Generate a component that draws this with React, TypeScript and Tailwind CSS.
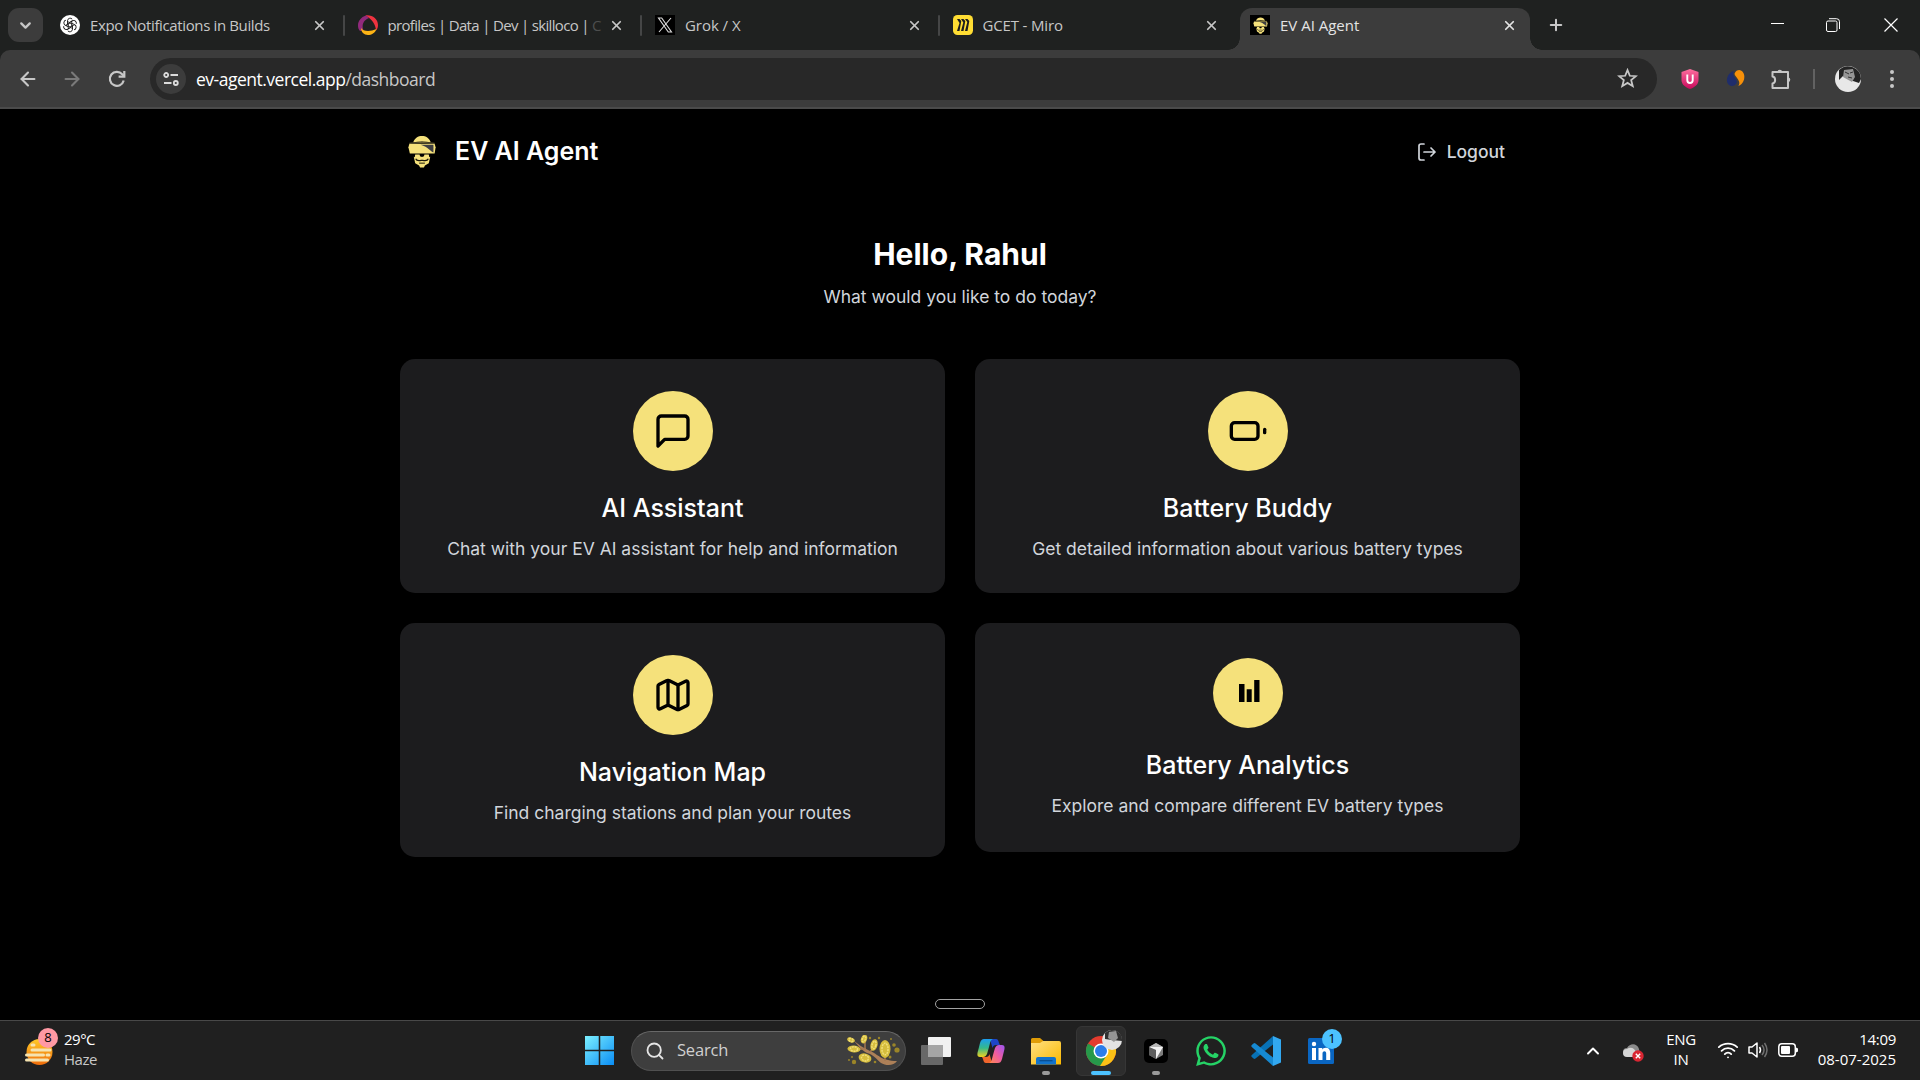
import React from "react";
import { Map, Search, ChevronDown, ChevronUp, ArrowLeft, ArrowRight, Plus, X, Wifi } from "lucide-react";
import { FaWhatsapp } from "react-icons/fa";

const ui = "font-['Open_Sans','Noto_Sans',sans-serif]";

function RobotFace({ className }: { className?: string }) {
  return (
    <svg viewBox="0 0 30 34" className={className}>
      <path d="M6 7.500C7.500 3 11 1 15 1s7.500 2 9 6.500Q15 5.800 6 7.500z" fill="#f5e17b" />
      <path d="M2 9h26l1 3.500-1 6.500H2.500L1 12.500z" fill="#f5e17b" />
      <path d="M13.500 10h13.300v8c-3-1-5-5.500-13.300-8z" fill="#3f3f43" />
      <path d="M2 8.500Q15 6.800 28 8.500" stroke="#6b6238" strokeWidth="1" fill="none" />
      <path d="M8 20h4.500l.5 2h4l.5-2H22l.5 3 1-.500-1.500 6.500-4 2.500-1 2h-4l-1-2-4-2.500L6.500 22.500l1 .500z" fill="#f5e17b" />
      <path d="M8.500 24.500c1 3 4 2 6.500 1.500 2.500.5 5.500 1.500 6.500-1.500" stroke="#171509" strokeWidth="1.200" fill="none" />
      <path d="M12 29h6" stroke="#171509" strokeWidth="1" fill="none" />
      <path d="M13.300 22.500l1.700-2.500 1.700 2.500z" fill="#000" />
    </svg>
  );
}

function OpenAiIcon() {
  return (
    <svg viewBox="0 0 20 20" className="size-5">
      <circle cx="10" cy="10" r="10" fill="#fff" />
      <g fill="none" stroke="#111" strokeWidth=".9">
        {[0, 60, 120, 180, 240, 300].map((a) => (
          <path key={a} transform={`rotate(${a} 10 10)`} d="M7.500 9V5.800a2.700 2.700 0 0 1 4.700-1.700M7.500 6.500l4.700 2.700" />
        ))}
      </g>
    </svg>
  );
}

function SwirlIcon() {
  return (
    <svg viewBox="0 0 20 20" className="size-5">
      <path d="M7.500.500C14-.500 20 4 20 10c0 2-.5 4-2 5.500C17.500 9.500 14 4 7.500.500z" fill="#ef3340" />
      <path d="M8 .500C3 2 0 6 0 10.500c0 2 .5 4 2 5.500l3.500-.5C3.500 10 5 5.500 11 3z" fill="#912a7c" />
      <path d="M3 13c2 3.500 9 4 15.500 1-1.500 4-5 6-8.500 6-4 0-7-3-7-7z" fill="#fcb315" />
    </svg>
  );
}

function XLogo() {
  return (
    <svg viewBox="0 0 20 20" className="size-5">
      <rect width="20" height="20" fill="#000" />
      <path d="M3.500 3h3.200l9.800 14h-3.200zM16 3L4 17M6.500 3h-3" stroke="#ddd" strokeWidth="1.100" fill="none" />
    </svg>
  );
}

function MiroIcon() {
  return (
    <svg viewBox="0 0 20 20" className="size-5">
      <rect width="20" height="20" rx="4.500" fill="#ffdd33" />
      <path d="M4 4h2.500l1.800 2L6.500 16H4l2.500-8zM8 4h2.500l1.800 2-1.800 10H8l2.300-8.500zM12 4h2.500l1.800 2-1.800 10H12l2.300-9z" fill="#1c1c1e" />
    </svg>
  );
}

function EvIcon() {
  return (
    <span className="flex size-5 items-center justify-center bg-black">
      <RobotFace className="h-[17px] w-[15px]" />
    </span>
  );
}

function Tab({ icon, title, tracking, faded }: { icon: React.ReactNode; title: string; tracking: string; faded?: string }) {
  return (
    <div className="flex h-full w-[297.500px] shrink-0 items-center pl-[13px] pr-[18px]">
      {icon}
      <span className={`ml-[10px] flex-1 text-[15px] leading-5 whitespace-nowrap ${tracking}`}>
        {title}
        {faded && <span className="text-[#4d4e4e]">{faded}</span>}
      </span>
      <X className="size-[15px] shrink-0" strokeWidth={2.800} />
    </div>
  );
}

function Separator() {
  return <i className="relative -left-px -mx-px h-[21px] w-[2px] shrink-0 rounded bg-[#454646]" />;
}

function TabStrip() {
  return (
    <div className="flex h-[50px] items-center bg-[#1f2120] text-[#c7c7c7]">
      <div className="ml-2 flex h-[34px] w-[35px] shrink-0 items-center justify-center rounded-[11px] bg-[#3c3c3c]">
        <ChevronDown className="size-[17px]" strokeWidth={3.200} />
      </div>
      <div className="ml-[4px] flex h-full items-center">
        <Tab icon={<OpenAiIcon />} title="Expo Notifications in Builds" tracking="tracking-[-0.370px]" />
        <Separator />
        <Tab icon={<SwirlIcon />} title="profiles | Data | Dev | skilloco | " faded="C" tracking="tracking-[-0.670px]" />
        <Separator />
        <Tab icon={<XLogo />} title="Grok / X" tracking="tracking-[-0.050px]" />
        <Separator />
        <Tab icon={<MiroIcon />} title="GCET - Miro" tracking="tracking-[-0.150px]" />
      </div>
      <div className="relative ml-[3px] mt-[8px] flex h-[42px] w-[290px] shrink-0 items-center rounded-t-[12px] bg-[#3c3c3c] pb-[8px] pl-[10px] pr-[13px] text-[#e4e4e4]">
        <i className="absolute -left-3 bottom-0 size-3 bg-[radial-gradient(circle_at_0_0,#1f2120_11.500px,#3c3c3c_12px)]" />
        <i className="absolute -right-3 bottom-0 size-3 bg-[radial-gradient(circle_at_100%_0,#1f2120_11.500px,#3c3c3c_12px)]" />
        <EvIcon />
        <span className="ml-[10px] flex-1 text-[15px] tracking-[0px]">EV AI Agent</span>
        <X className="size-[15px]" strokeWidth={2.800} />
      </div>
      <Plus className="ml-[17px] size-[18px]" strokeWidth={2.700} />
      <div className="ml-auto flex h-full items-center text-white">
        <i className="mb-[3px] h-px w-[13px] bg-white" />
        <svg viewBox="0 0 14 14" className="ml-[42px] size-[14px]" fill="none" stroke="currentColor">
          <rect x=".5" y="3" width="10.500" height="10.500" rx="1.500" />
          <path d="M3 .7h7.500a3 3 0 0 1 3 3V11" />
        </svg>
        <svg viewBox="0 0 14 14" className="ml-[44px] mr-[22px] size-[14px]" stroke="currentColor" strokeWidth="1.200">
          <path d="M.5.500l13 13M13.500.500l-13 13" />
        </svg>
      </div>
    </div>
  );
}

function Toolbar() {
  return (
    <div className="bg-[#1f2120]">
      <div className="flex h-[59px] items-center rounded-t-[10px] border-b-2 border-b-[#4b4b4b] bg-[#3c3c3c] text-[#c7c7c7]">
        <ArrowLeft className="ml-[17px] size-[22px]" strokeWidth={2.300} />
        <ArrowRight className="ml-[22px] size-[22px] text-[#7a7a7a]" strokeWidth={2.300} />
        <svg viewBox="0 0 24 24" className="ml-[22px] size-6" fill="none" stroke="currentColor" strokeWidth="2.200">
          <path d="M18.700 13.500a7 7 0 1 1-1.500-6.300l2 2" />
          <path d="M19.300 4v5.700h-5.700" />
        </svg>
        <div className="ml-[21px] flex h-[42px] w-[1507px] items-center rounded-full bg-[#282828] pl-[6px] pr-[19px]">
          <span className="flex size-[30px] items-center justify-center rounded-full bg-[#3c3c3c]">
            <svg viewBox="0 0 16 14" className="h-[14px] w-4" fill="none" stroke="#dcdcdc" strokeWidth="1.800">
              <circle cx="3.200" cy="3" r="2" />
              <path d="M7.500 3H15M1 11h7.500" />
              <circle cx="12.800" cy="11" r="2" />
            </svg>
          </span>
          <span className="ml-[10px] mt-[2px] flex-1 text-[17.500px] tracking-[-0.500px] text-white">
            ev-agent.vercel.app<span className="text-[#c7c7c7]">/dashboard</span>
          </span>
          <svg viewBox="0 0 20 20" className="size-[21px]" fill="none" stroke="currentColor" strokeWidth="1.700">
            <path d="M10 2l2.200 5.400 5.800.400-4.500 3.800 1.500 5.700-5-3.100-5 3.100 1.500-5.700L2 7.800l5.800-.400z" />
          </svg>
        </div>
        <svg viewBox="0 0 18 20" className="ml-[24px] h-5 w-[18px]">
          <defs>
            <linearGradient id="shield" x1="0" y1="0" x2="0" y2="1">
              <stop stopColor="#ff6f9f" />
              <stop offset="1" stopColor="#c9095c" />
            </linearGradient>
          </defs>
          <path d="M9 0l8.500 3v8c0 5-4.500 7.500-8.500 9C5 18.500.5 16 .5 11V3z" fill="url(#shield)" />
          <path d="M6.300 5.500v5.800a2.700 2.700 0 0 0 5.400 0V5.500" fill="none" stroke="#fff" strokeWidth="1.900" />
        </svg>
        <svg viewBox="0 0 20 20" className="ml-[27px] size-[19px]">
          <path d="M8 2C3 4 1 8 1 12c0 5 5 7 8 5 3-2 3-4 1-7-2-2-3-5-2-8z" fill="#1f2d6b" />
          <path d="M9 5c1-3 3-4 5-4 5 1 6 6 5 10-1 4-4 6-6 7 2-3 1-5-1-8-1-2-3-3-3-5z" fill="#f79009" />
        </svg>
        <svg viewBox="0 0 22 22" className="ml-[25px] size-[22px]" fill="none" stroke="currentColor" strokeWidth="2">
          <path d="M2.500 4H18v16H2.500v-4.500c3.500-.5 3.500-6.500 0-7z" strokeLinejoin="round" />
          <path d="M7.500 4a2.300 2.300 0 0 1 4.600 0zM18 9.500a2.300 2.300 0 0 1 0 4.600z" fill="currentColor" stroke="none" />
        </svg>
        <i className="ml-[21px] h-5 w-[2px] bg-[#626262]" />
        <svg viewBox="0 0 26 26" className="ml-[20px] size-[26px]">
          <circle cx="13" cy="13" r="13" fill="#e8e8e8" />
          <path d="M4 4A13 13 0 0 1 26 13l-2 4-9-3-7-4-4 4z" fill="#242424" />
          <path d="M9 4l9-1 2 8-3 5-9-5z" fill="#969696" />
          <path d="M10 6l4 2M15 7l3-1M13 11l4 1" stroke="#333" />
        </svg>
        <svg viewBox="0 0 4 20" className="ml-[29px] h-5 w-1 fill-current">
          <circle cx="2" cy="3" r="2" />
          <circle cx="2" cy="10" r="2" />
          <circle cx="2" cy="17" r="2" />
        </svg>
      </div>
    </div>
  );
}

function Card({ icon, title, text, small }: { icon: React.ReactNode; title: string; text: string; small?: boolean }) {
  return (
    <article className={`flex flex-col items-center self-start rounded-[15px] bg-[#1c1c1e] ${small ? "h-[229px] pt-[35px]" : "h-[234px] pt-8"}`}>
      <div className={`flex items-center justify-center rounded-full bg-[#f5e17b] text-black ${small ? "size-[70px]" : "size-20"}`}>{icon}</div>
      <h2 className="mt-5 text-[25px] leading-[35px] font-medium text-white">{title}</h2>
      <p className="mt-[10px] text-[17.500px] leading-[25px] text-[#d1d5db]">{text}</p>
    </article>
  );
}

function Dashboard() {
  return (
    <main className="flex flex-1 flex-col items-center bg-black font-[Inter,sans-serif] text-white">
      <header className="mt-[23px] flex h-[40px] w-[1120px] items-center pl-[7px] pr-[15px]">
        <RobotFace className="mb-[2px] h-[33px] w-[30px]" />
        <h1 className="ml-[18px] text-[25px] font-semibold">EV AI Agent</h1>
        <button className="ml-auto flex items-center gap-[10px] text-[17.500px] font-medium text-[#d1d5db]">
          <svg viewBox="0 0 20 20" className="size-5" fill="none" stroke="currentColor" strokeWidth="1.700" strokeLinecap="round" strokeLinejoin="round">
            <path d="M7 2H4a2 2 0 0 0-2 2v12a2 2 0 0 0 2 2h3M7 10h11M14 6l4 4-4 4" />
          </svg>
          Logout
        </button>
      </header>
      <h2 className="mt-[64px] text-[30px] leading-[36px] font-bold">Hello, Rahul</h2>
      <p className="mt-[12px] text-[17.500px] leading-[25px] text-[#d1d5db]">What would you like to do today?</p>
      <section className="mt-[50px] grid w-[1120px] grid-cols-2 gap-[30px]">
        <Card
          icon={
            <svg viewBox="0 0 24 24" className="size-10" fill="none" stroke="currentColor" strokeWidth="2" strokeLinecap="round" strokeLinejoin="round">
              <path d="M21 15a2 2 0 0 1-2 2H7l-4 4V5a2 2 0 0 1 2-2h14a2 2 0 0 1 2 2z" />
            </svg>
          }
          title="AI Assistant"
          text="Chat with your EV AI assistant for help and information"
        />
        <Card
          icon={
            <svg viewBox="0 0 24 24" className="size-10" fill="none" stroke="currentColor" strokeWidth="2" strokeLinecap="round" strokeLinejoin="round">
              <rect x="2" y="7" width="16" height="10" rx="2" />
              <path d="M22 11v2" />
            </svg>
          }
          title="Battery Buddy"
          text="Get detailed information about various battery types"
        />
        <Card icon={<Map className="size-10" />} title="Navigation Map" text="Find charging stations and plan your routes" />
        <Card
          small
          icon={
            <svg viewBox="0 0 21 22" className="mb-[4px] ml-[3px] h-[22px] w-[21px]">
              <path d="M0 4h5.500v18H0zM7.700 9.200h5V22h-5zM15.200 0h5.300v22h-5.300z" />
            </svg>
          }
          title="Battery Analytics"
          text="Explore and compare different EV battery types"
        />
      </section>
      <i className="mt-[142px] h-[10px] w-[50px] rounded-full border border-[#a3a3a3]" />
    </main>
  );
}

function WindowsLogo() {
  return (
    <svg viewBox="0 0 30 30" className="size-[29px]">
      <defs>
        <linearGradient id="win" x1="0" y1="0" x2="30" y2="30" gradientUnits="userSpaceOnUse">
          <stop stopColor="#7cf0ff" />
          <stop offset="1" stopColor="#0a8df5" />
        </linearGradient>
      </defs>
      <path d="M0 0h14.200v14.200H0zM15.800 0H30v14.200H15.800zM0 15.800h14.200V30H0zM15.800 15.800H30V30H15.800z" fill="url(#win)" />
    </svg>
  );
}

function Branch() {
  const pods = [
    [4, 5, 4, 2.500, 20], [17, 4, 3, 4.500, 20], [7, 14, 6.500, 3.500, 5], [27, 10, 3.500, 6, 15], [38, 14, 5.500, 9, 0], [18, 23, 6.500, 4.500, 15],
  ];
  const dots = [[23, 3, 1.200], [44, 4, 1], [47, 10, 1.800], [50, 15, 2.600], [43, 22, 1.500], [2, 25, 1], [7, 27, 2.200], [5, 22, 1], [28, 27, 1.300], [32, 3, 1.200]];
  return (
    <svg viewBox="0 0 53 32" className="h-[32px] w-[53px]">
      <path d="M6 5c5 4 10 8 17 11 8 3 11 10 27 10-3 5-11 5-16 2-5-4-7-8-14-10C14 15 10 9 6 5z" fill="#ad8058" />
      <path d="M11 14h8M27 12l-4 5M18 5v9M38 20v6" stroke="#a27751" strokeWidth="1.500" />
      {pods.map(([x, y, rx, ry, r], i) => (
        <g key={i} transform={`rotate(${r} ${x} ${y})`}>
          <ellipse cx={x} cy={y} rx={rx} ry={ry} fill="#d6bd3c" />
          <ellipse cx={x} cy={y} rx={rx * 0.55} ry={ry * 0.65} fill="none" stroke="#f0df78" strokeWidth="1.500" strokeDasharray="2 .8" />
        </g>
      ))}
      {dots.map(([x, y, r], i) => (
        <circle key={i} cx={x} cy={y} r={r} fill="#9b8528" />
      ))}
    </svg>
  );
}

function Copilot() {
  return (
    <svg viewBox="0 0 28 26" className="h-[26px] w-7">
      <defs>
        <linearGradient id="cpl" x1="0" y1="0" x2="0" y2="1">
          <stop stopColor="#1b9df0" />
          <stop offset=".5" stopColor="#35b98a" />
          <stop offset="1" stopColor="#f3d21d" />
        </linearGradient>
        <linearGradient id="cpr" x1="1" y1="0" x2="0" y2="1">
          <stop stopColor="#9a55f5" />
          <stop offset=".5" stopColor="#ee5ba0" />
          <stop offset="1" stopColor="#ff8a4c" />
        </linearGradient>
      </defs>
      <path d="M13 1h6c2 0 2.500 2 3 4l1 2h-4c-2 0-3 1-3.500 3z" fill="#1d45c7" />
      <path d="M7 1h9c-3 1-3 5-4 8l-2 7c-1 2-2 3-4 3H3c-3 0-3-3-2-6l2-8c1-3 2-4 4-4z" fill="url(#cpl)" />
      <path d="M15 25H9c-2 0-2.500-2-3-4l-1-2h4c2 0 3-1 3.500-3z" fill="#f0652c" />
      <path d="M21 25h-9c3-1 3-5 4-8l2-7c1-2 2-3 4-3h3c3 0 3 3 2 6l-2 8c-1 3-2 4-4 4z" fill="url(#cpr)" />
    </svg>
  );
}

function Explorer() {
  return (
    <svg viewBox="0 0 30 28" className="h-7 w-[30px]">
      <defs>
        <linearGradient id="fold" x1="0" y1="0" x2="1" y2="1">
          <stop stopColor="#ffe083" />
          <stop offset="1" stopColor="#fbb900" />
        </linearGradient>
      </defs>
      <path d="M0 2.500Q0 1 1.500 1H9l3.500 3H28v8H0z" fill="#df9c07" />
      <path d="M0 6h9l3-2h16q2 0 2 2v21.500H0z" fill="url(#fold)" />
      <path d="M5 27.500V22q0-2 2-2h16q2 0 2 2v5.500z" fill="#1273cc" />
      <path d="M8.500 23.700h13" stroke="#0a4d91" strokeWidth="1.300" />
    </svg>
  );
}

function ChromeIcon() {
  return (
    <svg viewBox="0 0 40 38" className="mb-[6px] ml-[8px] h-[38px] w-10 shrink-0">
      <circle cx="16" cy="22" r="15" fill="#e33b2e" />
      <path d="M16 22L3 14.500A15 15 0 0 0 16 37l6.500-11.300z" fill="#26994a" />
      <path d="M16 22V15h13.200A15 15 0 0 1 15 37l7-11.300z" fill="#fbc116" />
      <circle cx="16" cy="22" r="7.500" fill="#fff" />
      <circle cx="16" cy="22" r="6" fill="#2b7de9" />
      <circle cx="27" cy="11" r="10" fill="#e3e3e3" />
      <path d="M20 4a10 10 0 0 1 17 8l-10-1-7-1z" fill="#303030" />
      <path d="M24 3l7-1 2 7-4 4-6-4z" fill="#969696" />
    </svg>
  );
}

function Cursor() {
  return (
    <svg viewBox="0 0 24 24" className="size-6">
      <rect width="24" height="24" rx="5" fill="#000" />
      <path d="M12 4l7 4v8l-7 4-7-4V8z" fill="#7c7c7c" />
      <path d="M5 8l7-4 7 4-7 4z" fill="#b7b7b7" />
      <path d="M5 8h14l-7 12V11z" fill="#f1f1f1" />
      <path d="M5 8l7 3v9l-7-4z" fill="#5d5d5d" />
    </svg>
  );
}

function VsCode() {
  return (
    <svg viewBox="0 0 30 30" className="size-[30px]">
      <path d="M22 0l8 3.500v23L22 30z" fill="#32a8f0" />
      <path d="M22 0v8.500L4.500 22.500q-1 .8-2 0L.8 21q-1-1 0-2z" fill="#0871b5" />
      <path d="M22 30v-8.500L4.500 7.500q-1-.8-2 0L.8 9q-1 1 0 2z" fill="#1689d2" />
    </svg>
  );
}

function TaskItem({ children, className = "", dot }: { children: React.ReactNode; className?: string; dot?: "grey" | "blue" }) {
  return (
    <div className={`relative flex h-[50px] w-[50px] shrink-0 items-center justify-center ${className}`}>
      {children}
      {dot === "grey" && <i className="absolute bottom-[1px] left-[21px] h-1 w-2 rounded-full bg-[#9a9a9a]" />}
      {dot === "blue" && <i className="absolute bottom-0 left-[14px] h-1 w-5 rounded-full bg-[#4cc2ff]" />}
    </div>
  );
}

function Taskbar() {
  return (
    <footer className={`flex h-[60px] items-center border-t border-[#484848] bg-[#202020] text-[15px] text-white ${ui}`}>
      <div className="flex w-[574px] items-center pl-[24px]">
        <div className="relative mt-1 size-[30px]">
          <svg viewBox="0 0 30 30" className="size-[30px]">
            <defs>
              <linearGradient id="sun" x1="0" y1="0" x2="0" y2="1">
                <stop stopColor="#ffca28" />
                <stop offset="1" stopColor="#ef6c0a" />
              </linearGradient>
            </defs>
            <circle cx="15.500" cy="14" r="13" fill="url(#sun)" />
            <path d="M8 7h2M8 12h18M2.500 17h17M23 17h2M2.500 22h21" stroke="#f5e3b0" strokeWidth="3" strokeLinecap="round" />
          </svg>
          <b className="absolute -top-[10px] left-[14px] flex size-5 items-center justify-center rounded-full bg-[#ff99a4] text-[13px] font-normal text-black">8</b>
        </div>
        <div className="mb-[4px] ml-[10px] leading-5 tracking-[-0.500px]">
          <p>29°C</p>
          <p className="text-[#c8c8c8]">Haze</p>
        </div>
      </div>
      <TaskItem><WindowsLogo /></TaskItem>
      <div className="ml-[7px] flex h-10 w-[275px] items-center rounded-full border border-[#505050] border-t-[#686868] bg-[#3e3e3e] pl-[13px] pr-[5px]">
        <Search className="size-5 text-[#e5e5e5]" strokeWidth={2.200} />
        <span className="ml-[12px] flex-1 text-[16.500px] tracking-[-0.200px] text-[#d0d0d0]">Search</span>
        <Branch />
      </div>
      <TaskItem className="ml-[5px]">
        <svg viewBox="0 0 30 28" className="h-7 w-[30px]">
          <rect y="8" width="22" height="20" rx="1" fill="#686868" />
          <rect x="7" width="23" height="20" rx="1" fill="#f1f1f1" />
          <path d="M7 8h15v12H7z" fill="#a5a5a5" />
        </svg>
      </TaskItem>
      <TaskItem className="ml-[5px]"><Copilot /></TaskItem>
      <TaskItem className="ml-[5px]" dot="grey"><Explorer /></TaskItem>
      <TaskItem className="ml-[5px] rounded-md border border-[#363636] bg-[#2d2d2d]" dot="blue">
        <ChromeIcon />
      </TaskItem>
      <TaskItem className="ml-[5px]" dot="grey"><Cursor /></TaskItem>
      <TaskItem className="ml-[5px]"><FaWhatsapp className="size-[34px] text-[#25d366]" /></TaskItem>
      <TaskItem className="ml-[5px]"><VsCode /></TaskItem>
      <TaskItem className="ml-[5px]">
        <svg viewBox="0 0 26 26" className="size-[26px]">
          <rect width="26" height="26" rx="1.500" fill="#0a66c2" />
          <circle cx="6" cy="6" r="2.200" fill="#fff" />
          <path d="M4 10h4v12H4zM10.500 10h3.700v1.700c1-2.700 8-3.200 8 3V22h-4v-6.500c0-3.200-3.700-2.800-3.700 0V22h-4z" fill="#fff" />
        </svg>
        <b className="absolute top-[3px] right-[4px] flex size-5 items-center justify-center rounded-full bg-[#4cc2ff] text-[13px] font-normal text-black">1</b>
      </TaskItem>
      <div className="ml-auto flex items-center pr-6">
        <ChevronUp className="size-5" strokeWidth={2.300} />
        <svg viewBox="0 0 21 18" className="ml-[20px] mt-1 h-[18px] w-[21px]">
          <path d="M4 12a4 4 0 0 1 0-8C7-1 14-1 16 5l1 7z" fill="#8b8b8b" />
          <path d="M4 13a4 4 0 0 1 0-8c4-3 8 0 9 3v5z" fill="#d6d6d6" />
          <circle cx="15" cy="12" r="5.700" fill="#d92632" />
          <path d="M12.800 9.800l4.400 4.400M17.200 9.800l-4.400 4.400" stroke="#fff" strokeWidth="1.400" />
        </svg>
        <div className="mb-[3px] ml-[20px] w-[34px] text-center leading-5 tracking-[-0.300px]">
          <p>ENG</p>
          <p>IN</p>
        </div>
        <Wifi className="mb-[2px] ml-[19px] size-[22px]" strokeWidth={2} />
        <svg viewBox="0 0 20 18" className="mb-[2px] ml-[9px] h-[18px] w-5" fill="none" stroke="#fff" strokeWidth="1.500">
          <path d="M1 6h3l5-4v14l-5-4H1zM11.500 6q2 3 0 6" strokeLinejoin="round" />
          <path d="M14 4q4 5 0 10M16.500 2q5 7 0 14" stroke="#6f6f6f" />
        </svg>
        <svg viewBox="0 0 20 14" className="mb-[2px] ml-[10px] h-[14px] w-5">
          <rect x=".8" y=".8" width="16.500" height="12.400" rx="3" fill="none" stroke="#fff" strokeWidth="1.500" />
          <rect x="3" y="3" width="9" height="8" rx="1" fill="#fff" />
          <path d="M18 4.500l2 1v3l-2 1z" fill="#fff" />
        </svg>
        <div className="mb-[4px] ml-[19px] w-[79px] text-right leading-5 whitespace-nowrap">
          <p className="tracking-[-0.300px]">14:09</p>
          <p className="tracking-[0px]">08-07-2025</p>
        </div>
      </div>
    </footer>
  );
}

export default function App() {
  return (
    <div className="flex h-[1080px] w-[1920px] flex-col overflow-hidden bg-black">
      <div className={ui}>
        <TabStrip />
        <Toolbar />
      </div>
      <Dashboard />
      <Taskbar />
    </div>
  );
}
